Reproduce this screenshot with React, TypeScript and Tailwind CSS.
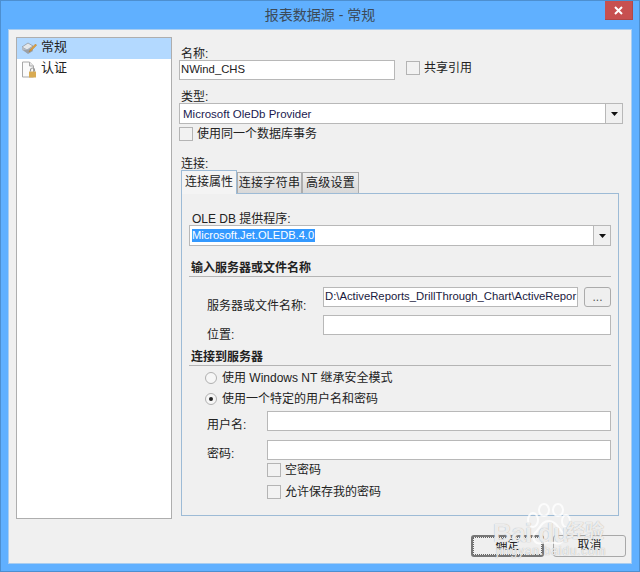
import type { ReactNode } from "react";

const font = "[font-family:'Liberation_Sans','Noto_Sans_CJK_SC',sans-serif]";

function Check({ label, className = "" }: { label: string; className?: string }) {
  return (
    <div className={`flex items-center gap-[4px] h-[14px] ${className}`}>
      <span className="w-[14px] h-[14px] border border-[#b4b4b4] bg-[#f2f2f2] shrink-0" />
      <span>{label}</span>
    </div>
  );
}

function Radio({ label, on, className = "" }: { label: ReactNode; on?: boolean; className?: string }) {
  return (
    <div className={`flex items-center gap-[5px] h-[14px] ${className}`}>
      <span className="w-[12px] h-[12px] rounded-full border border-[#b0b0b0] bg-[#f6f6f6] flex items-center justify-center shrink-0">
        {on && <span className="w-[4px] h-[4px] rounded-full bg-[#222]" />}
      </span>
      <span>{label}</span>
    </div>
  );
}

function Input({ className = "", children }: { className?: string; children?: ReactNode }) {
  return (
    <div className={`h-[20px] bg-white border border-[#b8b8b8] flex items-center leading-none ${className}`}>
      {children}
    </div>
  );
}

function Select({ className = "", children }: { className?: string; children?: ReactNode }) {
  return (
    <div className={`h-[21px] bg-white border border-[#b8b8b8] flex items-center ${className}`}>
      <div className="flex-1 flex items-center min-w-0">{children}</div>
      <div className="w-[17px] h-full bg-[#f0f0f0] border-l border-[#b8b8b8] flex items-center justify-center">
        <svg width="7" height="4" viewBox="0 0 7 4">
          <path d="M0 0h7L3.5 4z" fill="#111" />
        </svg>
      </div>
    </div>
  );
}

function Tab({ label, active, className = "" }: { label: string; active?: boolean; className?: string }) {
  return active ? (
    <div className={`h-[24px] -mb-px pb-[2px] z-10 relative bg-[#f4f4f4] border border-b-0 border-[#9dbbd6] flex items-center justify-center ${className}`}>
      {label}
    </div>
  ) : (
    <div className={`h-[21px] bg-linear-to-b from-[#efefef] to-[#d8d8d8] border border-b-0 border-[#adadad] flex items-center justify-center tracking-[0.3px] ${className}`}>
      {label}
    </div>
  );
}

function Section({ title, className = "" }: { title: string; className?: string }) {
  return (
    <div className={`border-b border-[#b4b4b4] h-[15px] leading-[13px] font-bold pl-[2px] ${className}`}>{title}</div>
  );
}

function Button({ label, primary, className = "" }: { label: string; primary?: boolean; className?: string }) {
  return (
    <div
      className={`w-[73px] h-[22px] pb-[2px] rounded-[3px] flex items-center justify-center bg-[#efefef] ${
        primary ? "border-2 border-[#777] outline-1 -outline-offset-3 outline-dotted outline-[#666]" : "border border-[#a8a8a8]"
      } ${className}`}
    >
      {label}
    </div>
  );
}

function Watermark() {
  return (
    <div className="absolute left-[490px] top-[500px] w-[150px] h-[60px] text-white/80 [text-shadow:0_0_1px_#9a9a9a] pointer-events-none">
      <svg className="absolute left-[30px] top-[2px]" width="50" height="46" viewBox="0 0 50 46" fill="none" stroke="#ffffff" strokeOpacity="0.8" strokeWidth="2">
        <ellipse cx="12" cy="17" rx="5" ry="7" />
        <ellipse cx="23" cy="7" rx="5" ry="6" />
        <ellipse cx="37" cy="7" rx="5" ry="6" />
        <ellipse cx="45" cy="18" rx="4" ry="6" />
        <path d="M28 18c7 0 10 8 14 12 4 6-2 12-8 10-4-1-9-1-13 0-7 2-11-5-7-10 5-4 6-12 14-12z" />
      </svg>
      <span className="absolute left-[2px] top-[19px] text-[26px] leading-none font-bold tracking-tight">Bai</span>
      <span className="absolute left-[47px] top-[19px] text-[26px] leading-none font-bold tracking-tight">du</span>
      <span className="absolute left-[75px] top-[21px] text-[19px] leading-none font-bold">经验</span>
      <span className="absolute left-[5px] top-[44px] text-[12px] leading-none tracking-[0.8px]">jingyan.baidu.com</span>
    </div>
  );
}

export default function App() {
  return (
    <div className={`relative w-[640px] h-[572px] overflow-hidden bg-[#60b0ff] border border-[#4d8fd0] text-[12px] leading-[14px] text-[#222] ${font}`}>
      <div className="h-[28px] flex items-center justify-center text-[14px] text-[#3c4a58]">报表数据源 - 常规</div>
      <div className="absolute right-[6px] top-0 w-[28px] h-[19px] bg-[#c75050] flex items-center justify-center border-r border-b border-[#b04848]">
        <svg width="9" height="9" viewBox="0 0 9 9" stroke="#fff" strokeWidth="2">
          <path d="M1 1l7 7M8 1l-7 7" />
        </svg>
      </div>

      <div className="mx-[7px] h-[535px] bg-[#f0f0f0] border border-[#a9cdf0] flex flex-col">
        <div className="flex">
          <div className="w-[156px] h-[482px] ml-[7px] mt-[7px] bg-white border border-[#aeaeae] shrink-0">
            <div className="h-[21px] bg-[#b3d9ff] flex items-center gap-[4px] pl-[4px] text-[13px]">
              <svg width="16" height="16" viewBox="0 0 16 16">
                <path d="M1 6l6-4 5 3-6 4z" fill="#e4e7ea" stroke="#8a8f96" strokeWidth="0.7" />
                <path d="M1 6v3l5 3V9z" fill="#b4bac2" />
                <path d="M2 9l5 4 5-3-1-3-5 2z" fill="#9aa0a8" />
                <path d="M8 11l1.500-3 5-5 1.200 1.200-5 5z" fill="#e0a040" stroke="#a87420" strokeWidth="0.4" />
              </svg>
              <span className="pb-[3px]">常规</span>
            </div>
            <div className="h-[21px] flex items-center gap-[4px] pl-[4px] text-[13px]">
              <svg width="16" height="18" viewBox="0 0 16 18">
                <path d="M1.5 1h7l4 4v11h-11z" fill="#fbfbfb" stroke="#a8a8a8" />
                <path d="M8.500 1v4h4" fill="#e6e6e6" stroke="#a8a8a8" />
                <rect x="8" y="10.500" width="7" height="6" fill="#d9ab52" />
                <path d="M9.500 10.500V9a2 2 0 014 0v1.500" fill="none" stroke="#9a9a9a" strokeWidth="1.200" />
              </svg>
              <span className="pb-[3px]">认证</span>
            </div>
          </div>

          <div className="flex-1 ml-[7px] mt-[17px] mr-[10px] min-w-0">
            <div className="pl-[2px] h-[13px]">名称:</div>
            <div className="flex items-start">
              <Input className="w-[216px] pl-[1px] text-[11.300px]">NWind_CHS</Input>
              <Check label="共享引用" className="ml-[11px] mt-[1px] gap-[3px]" />
            </div>
            <div className="pl-[2px] pt-[1px] mt-[9px] h-[14px]">类型:</div>
            <Select className="w-[444px]">
              <span className="pl-[3px] text-[11.500px] text-[#1a1a50]">Microsoft OleDb Provider</span>
            </Select>
            <Check label="使用同一个数据库事务" className="mt-[3px]" />
            <div className="pl-[2px] mt-[16px] h-[14px]">连接:</div>

            <div className="ml-[2px] -mt-[1px] w-[438px]">
              <div className="flex items-end h-[23px] relative">
                <Tab label="连接属性" active className="w-[56px]" />
                <Tab label="连接字符串" className="w-[65px]" />
                <Tab label="高级设置" className="w-[57px]" />
              </div>
              <div className="h-[323px] border border-[#9dbbd6] pl-[7px] pr-[7px] pt-[18px]">
                <div className="pl-[3px] h-[14px]">OLE DB 提供程序:</div>
                <Select className="-mt-[1px]">
                  <span className="ml-[2px] bg-[#3399ff] text-white text-[11.100px] leading-[13px] pr-[1px]">Microsoft.Jet.OLEDB.4.0</span>
                </Select>

                <Section title="输入服务器或文件名称" className="mt-[16px]" />
                <div className="flex h-[20px] mt-[10px]">
                  <div className="w-[134px] pl-[18px] pt-[12px]">服务器或文件名称:</div>
                  <Input className="w-[255px] pl-[1px] overflow-hidden whitespace-nowrap text-[11.300px] text-[#1a1a40]">
                    D:\ActiveReports_DrillThrough_Chart\ActiveRepor
                  </Input>
                  <div className="ml-[6px] w-[27px] h-[20px] rounded-[3px] border border-[#ababab] bg-[#efefef] flex items-start justify-center leading-[18px] text-[#555]">...</div>
                </div>
                <div className="flex h-[20px] mt-[8px]">
                  <div className="w-[134px] pl-[18px] pt-[13px]">位置:</div>
                  <Input className="flex-1" />
                </div>

                <Section title="连接到服务器" className="mt-[16px]" />
                <Radio label="使用 Windows NT 继承安全模式" className="mt-[5px] ml-[16px]" />
                <Radio label="使用一个特定的用户名和密码" on className="mt-[7px] ml-[16px]" />
                <div className="flex h-[20px] mt-[5px]">
                  <div className="w-[78px] pl-[18px] pt-[7px]">用户名:</div>
                  <Input className="flex-1" />
                </div>
                <div className="flex h-[20px] mt-[9px]">
                  <div className="w-[78px] pl-[18px] pt-[7px]">密码:</div>
                  <Input className="flex-1" />
                </div>
                <Check label="空密码" className="ml-[78px] mt-[3px]" />
                <Check label="允许保存我的密码" className="ml-[78px] mt-[8px]" />
              </div>
            </div>
          </div>
        </div>

        <div className="flex justify-end gap-[9px] mt-[16px] pr-[5px]">
          <Button label="确定" primary />
          <Button label="取消" />
        </div>
      </div>
      <Watermark />
    </div>
  );
}
